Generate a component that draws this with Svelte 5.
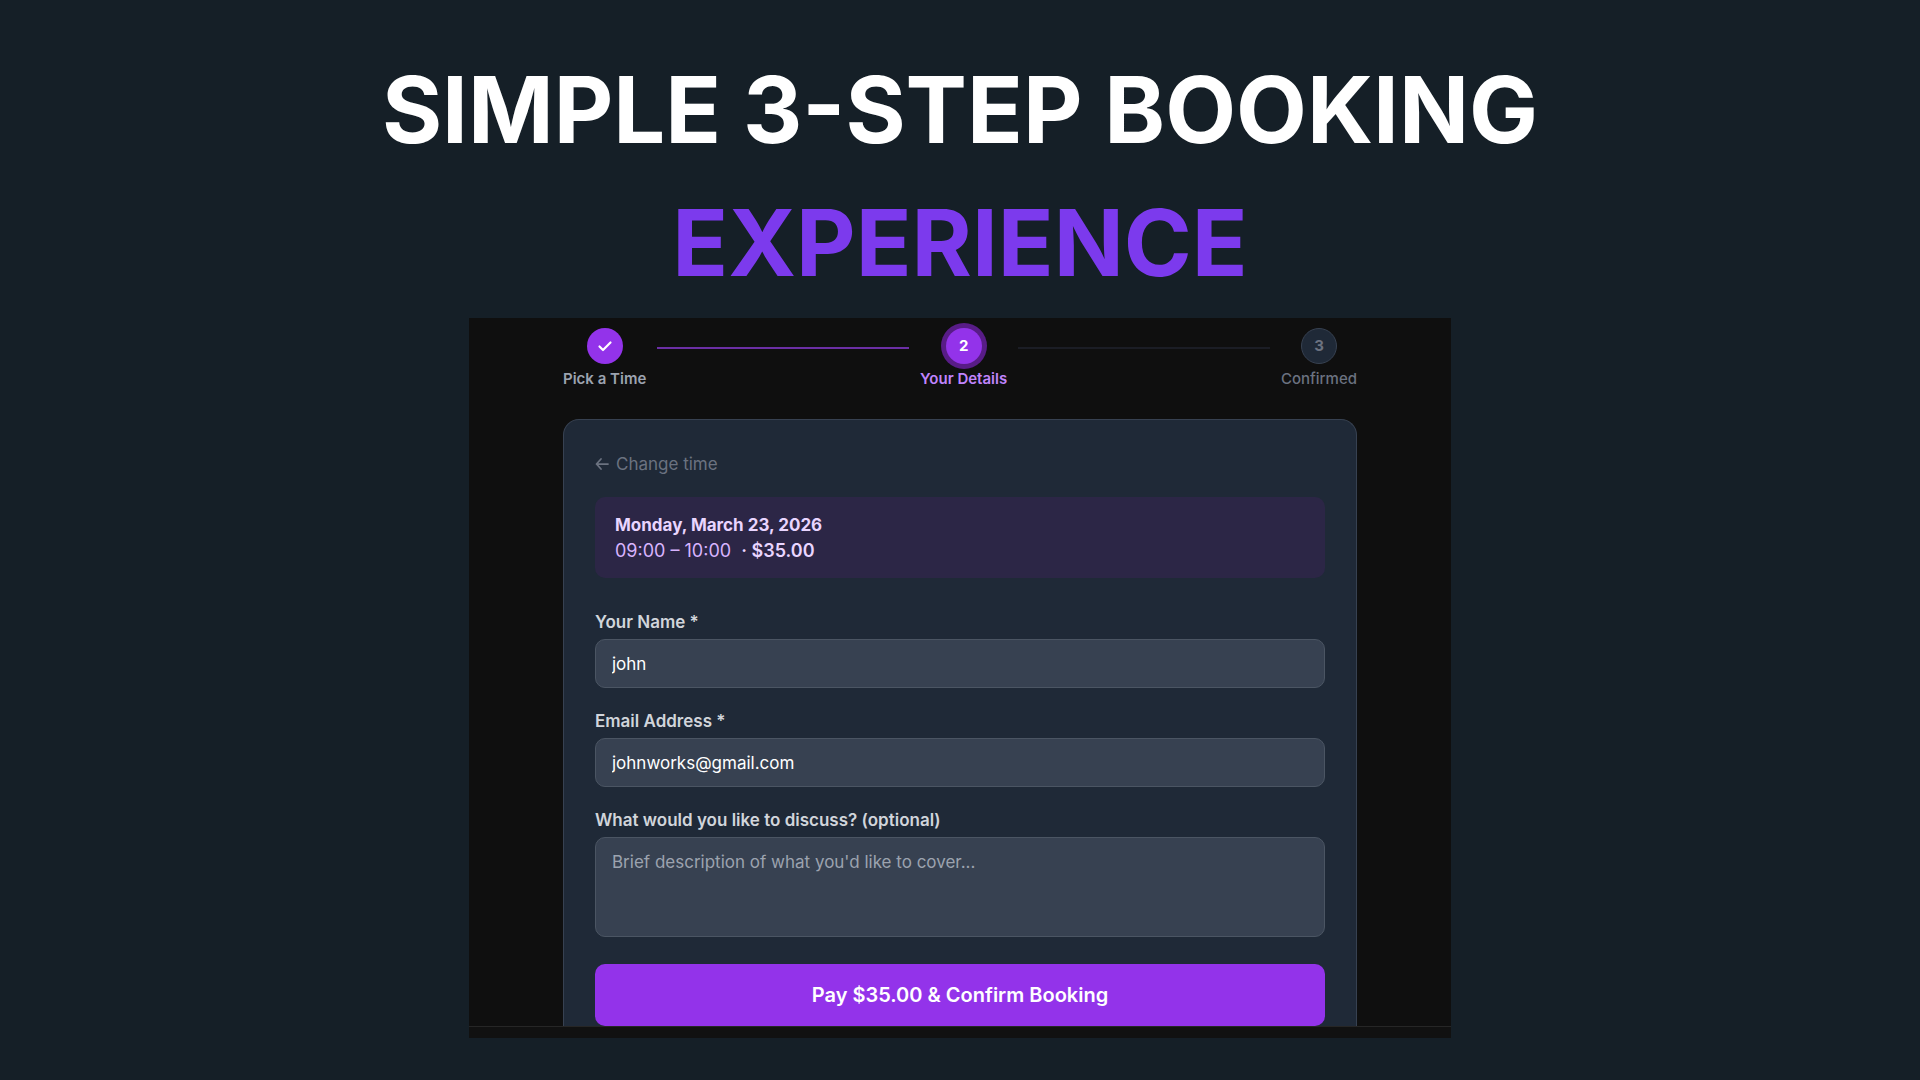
<script lang="ts">
  const steps = [
    { label: 'Pick a Time', status: 'done' },
    { label: 'Your Details', status: 'current' },
    { label: 'Confirmed', status: 'upcoming' },
  ]
  const price = '$35.00'

  let name = $state('john')
  let email = $state('johnworks@gmail.com')
  let topic = $state('')
</script>

<main class="page">
  <h1 class="title">
    Simple 3-step booking
    <span class="accent">experience</span>
  </h1>

  <section class="window">
    <div class="content">
      <ol class="steps">
        {#each steps as step, i}
          {#if i > 0}
            <li class="connector" class:filled={steps[i - 1].status === 'done'} aria-hidden="true"></li>
          {/if}
          <li class="step {step.status}">
            <span class="circle">
              {#if step.status === 'done'}
                <svg viewBox="0 0 16 16" width="16" height="16" aria-hidden="true">
                  <path d="M2.5 8.5 6 12 13.5 4.5" fill="none" stroke="currentColor" stroke-width="2.2" stroke-linecap="round" stroke-linejoin="round" />
                </svg>
              {:else}
                {i + 1}
              {/if}
            </span>
            <span class="step-label">{step.label}</span>
          </li>
        {/each}
      </ol>

      <form class="card" onsubmit={(e) => e.preventDefault()}>
        <button type="button" class="back">
          <svg viewBox="0 0 14 14" width="14" height="14" aria-hidden="true">
            <path d="M6 2 1.5 7 6 12 M1.5 7H13" fill="none" stroke="currentColor" stroke-width="1.75" stroke-linecap="round" stroke-linejoin="round" />
          </svg>
          Change time
        </button>

        <div class="summary">
          <div class="date">Monday, March 23, 2026</div>
          <div class="time">09:00 – 10:00 &nbsp;<strong>· {price}</strong></div>
        </div>

        <div class="field">
          <label for="name">Your Name *</label>
          <input id="name" type="text" bind:value={name} />
        </div>
        <div class="field">
          <label for="email">Email Address *</label>
          <input id="email" type="email" bind:value={email} />
        </div>
        <div class="field">
          <label for="topic">What would you like to discuss? (optional)</label>
          <textarea id="topic" placeholder="Brief description of what you'd like to cover..." bind:value={topic}></textarea>
        </div>

        <button type="submit" class="submit">Pay {price} &amp; Confirm Booking</button>
      </form>
    </div>
    <div class="bottom-bar"></div>
  </section>
</main>

<style>
  :global(body) {
    margin: 0;
    background: #151f27;
  }
  .page {
    box-sizing: border-box;
    min-height: 100vh;
    padding: 43px 24px 42px;
    display: flex;
    flex-direction: column;
    align-items: center;
    font-family: Inter, 'Liberation Sans', sans-serif;
  }
  .title {
    margin: 0 0 9px;
    color: #fff;
    font-size: 92px;
    line-height: 133px;
    font-weight: 700;
    text-align: center;
    text-transform: uppercase;
  }
  .accent {
    display: block;
    color: #7c3aed;
  }
  .window {
    width: 100%;
    max-width: 982px;
    background: #0f0f0f;
  }
  .content {
    max-width: 794px;
    margin: 0 auto;
    padding: 10px 24px 0;
  }
  .steps {
    display: flex;
    align-items: center;
    gap: 11px;
    margin: 0 0 30px;
    padding: 0;
    list-style: none;
  }
  .step {
    display: flex;
    flex-direction: column;
    align-items: center;
    gap: 5px;
    color: #6b7280;
    font-size: 15px;
    line-height: 20px;
    font-weight: 500;
  }
  .step.done {
    color: #9ca3af;
  }
  .step.current {
    color: #c084fc;
  }
  .step.done,
  .step.current {
    font-weight: 600;
  }
  .circle {
    box-sizing: border-box;
    display: flex;
    align-items: center;
    justify-content: center;
    width: 36px;
    height: 36px;
    border: 1px solid #374151;
    border-radius: 50%;
    background: #1f2937;
    font-weight: 700;
  }
  .done .circle,
  .current .circle {
    border: 0;
    background: #9333ea;
    color: #fff;
  }
  .current .circle {
    box-shadow: 0 0 0 5px #581c87;
  }
  .connector {
    flex: 1;
    height: 2px;
    margin-bottom: 22px;
    background: #1b1d25;
  }
  .connector.filled {
    background: #6b2fa5;
  }
  .card {
    border: 1px solid #374151;
    border-bottom: 0;
    border-radius: 16px 16px 0 0;
    padding: 32px 31px 0;
    background: #1f2937;
  }
  button,
  input,
  textarea {
    font: inherit;
  }
  .back {
    display: flex;
    align-items: center;
    gap: 7px;
    margin: 0 0 21px;
    padding: 0;
    border: 0;
    background: none;
    color: #6b7280;
    font-size: 17px;
    line-height: 24px;
    cursor: pointer;
  }
  .summary {
    margin-bottom: 32px;
    padding: 15px 20px 14px;
    border-radius: 10px;
    background: #2c2646;
    color: #d8b4fe;
    line-height: 26px;
  }
  .date {
    color: #e9d5ff;
    font-size: 17px;
    font-weight: 700;
  }
  .time {
    font-size: 18px;
  }
  .time strong {
    color: #e9d5ff;
    font-weight: 600;
  }
  .field {
    display: flex;
    flex-direction: column;
    gap: 5px;
    margin-bottom: 21px;
  }
  label {
    color: #d1d5db;
    font-size: 17px;
    line-height: 24px;
    font-weight: 600;
  }
  input,
  textarea {
    box-sizing: border-box;
    width: 100%;
    margin: 0;
    padding: 11px 16px;
    border: 1px solid #4b5563;
    border-radius: 10px;
    outline: 0;
    background: #374151;
    color: #fff;
    font-size: 17px;
    line-height: 26px;
  }
  input {
    height: 49px;
  }
  textarea {
    display: block;
    height: 100px;
    resize: none;
  }
  textarea::placeholder {
    color: #9ca3af;
  }
  .submit {
    display: block;
    width: 100%;
    margin-top: 27px;
    padding: 17px;
    border: 0;
    border-radius: 10px;
    background: #9333ea;
    color: #fff;
    font-size: 20px;
    line-height: 28px;
    font-weight: 600;
    cursor: pointer;
  }
  .bottom-bar {
    height: 11px;
    border-top: 1px solid #262626;
    background: #111;
  }
</style>
